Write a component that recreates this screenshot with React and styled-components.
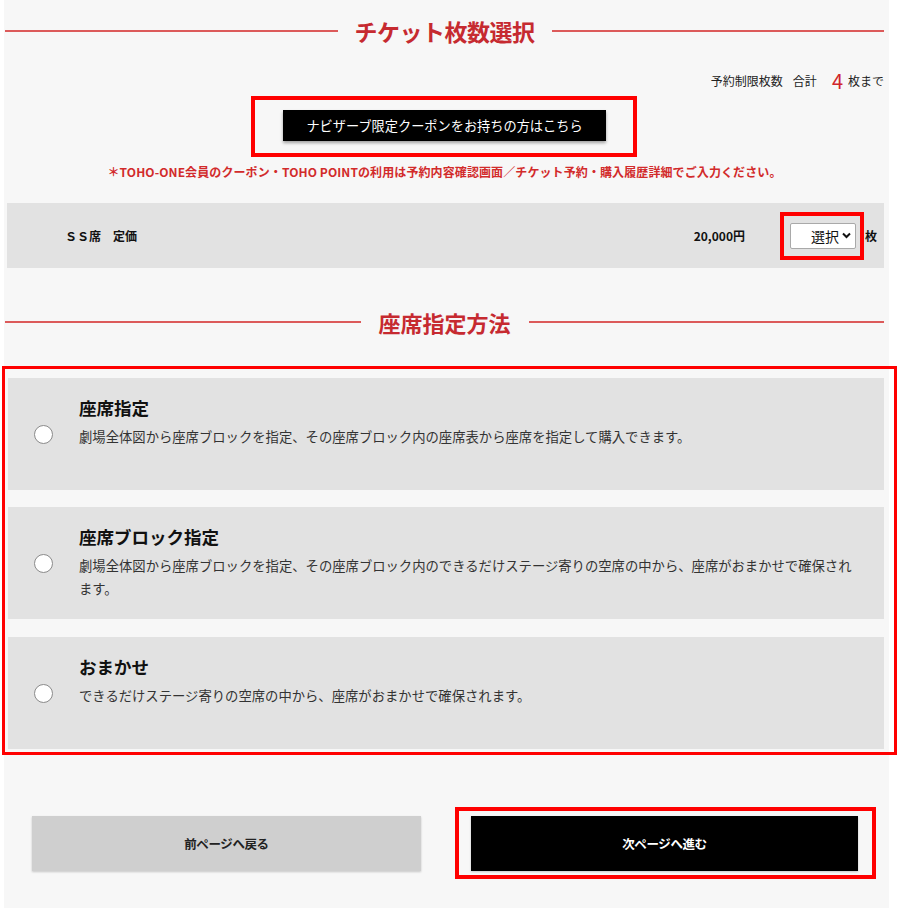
import React from 'react';
import styled, { createGlobalStyle } from 'styled-components';

const GlobalStyle = createGlobalStyle`
  body {
    margin: 0;
    background: #ffffff;
    font-family: "Noto Sans CJK JP", "Noto Sans", sans-serif;
    color: #222;
  }
`;

const Page = styled.div`
  margin-left: 4px;
  width: 885px;
  min-height: 908px;
  box-sizing: border-box;
  background: #f7f7f7;
  padding: 15px 5px 0 1px;
`;

const SectionTitle = styled.div`
  display: flex;
  align-items: center;
  gap: ${(p) => p.$gap || 17}px;
  height: 32px;
  margin-top: ${(p) => p.$top || 0}px;
  &::before,
  &::after {
    content: '';
    flex: 1;
    height: 2px;
    background: #dc5a5a;
  }
  h2 {
    margin: 0;
    font-size: ${(p) => p.$size}px;
    font-weight: 700;
    color: #c62a30;
    line-height: 32px;
    letter-spacing: ${(p) => p.$spacing || 0}px;
  }
`;

const Limit = styled.div`
  margin-top: 21px;
  height: 24px;
  display: flex;
  justify-content: flex-end;
  align-items: center;
  font-size: 12px;
  color: #222;
  span.total {
    margin-left: 10px;
  }
  span.count {
    color: #d0262c;
    font-size: 20px;
    margin: 0 5px 0 15px;
  }
`;

const Mark = styled.div`
  border: 4px solid #ff0000;
  box-sizing: border-box;
`;

const CouponMark = styled(Mark)`
  width: 386px;
  height: 61px;
  margin: 4px 0 0 246px;
  padding: 10px 0 0 28px;
`;

const CouponButton = styled.div`
  width: 323px;
  height: 31px;
  background: #000;
  color: #fff;
  font-size: 13.2px;
  display: flex;
  align-items: center;
  justify-content: center;
  box-shadow: 0 2px 3px rgba(0, 0, 0, 0.35);
`;

const Notice = styled.p`
  margin: 6px 0 0;
  line-height: 18px;
  text-align: center;
  font-size: 12px;
  font-weight: 700;
  color: #d22b2b;
  letter-spacing: 0.1px;
`;

const SeatRow = styled.div`
  margin: 22px 0 0 2px;
  height: 65px;
  background: #e2e2e2;
  display: flex;
  align-items: center;
  padding: 0 7px 0 58px;
  font-size: 12px;
  font-weight: 700;
  color: #111;
`;

const SeatName = styled.div`
  flex: 1;
`;

const Price = styled.div`
  margin-right: 35px;
`;

const SelectMark = styled(Mark)`
  width: 84px;
  height: 48px;
  padding: 7px 0 0 6px;
`;

const SelectBox = styled.div`
  width: 66px;
  height: 26px;
  box-sizing: border-box;
  background: #fff;
  border: 1px solid #a9a9a9;
  border-radius: 2px;
  display: flex;
  align-items: center;
  justify-content: flex-end;
  gap: 3px;
  padding-right: 4px;
  font-size: 14px;
  font-weight: 400;
  color: #111;
`;

const Unit = styled.span`
  margin-left: 1px;
`;

const MethodMark = styled(Mark)`
  width: 895px;
  margin: 28px 0 0 -3px;
  border-width: 3px;
  padding: 9px 10px 3px 3px;
  display: flex;
  flex-direction: column;
  gap: 17px;
`;

const MethodCard = styled.label`
  min-height: 112px;
  box-sizing: border-box;
  background: #e2e2e2;
  display: flex;
  align-items: center;
  padding: 0 22px 0 26px;
  &:nth-child(2) {
    margin-bottom: 1px;
  }
`;

const Radio = styled.span`
  width: 19px;
  height: 19px;
  flex: none;
  border-radius: 50%;
  border: 1px solid #8a8a8a;
  background: #fff;
  box-sizing: border-box;
  margin-right: 26px;
`;

const MethodBody = styled.div`
  align-self: flex-start;
  padding-top: 17px;
`;

const MethodTitle = styled.div`
  font-size: 17.5px;
  font-weight: 700;
  line-height: 26px;
  color: #111;
`;

const MethodText = styled.div`
  margin-top: 4px;
  font-size: 13.33px;
  line-height: 23px;
  color: #333;
`;

const Actions = styled.div`
  margin-top: 52px;
  display: flex;
  align-items: center;
  padding-left: 27px;
`;

const NavButton = styled.div`
  width: ${(p) => p.$width}px;
  height: 55px;
  display: flex;
  align-items: center;
  justify-content: center;
  font-size: 12.5px;
  font-weight: 700;
  letter-spacing: -0.4px;
  background: ${(p) => (p.$primary ? '#000' : '#cfcfcf')};
  color: ${(p) => (p.$primary ? '#fff' : '#222')};
  box-shadow: 0 1px 2px rgba(0, 0, 0, 0.2);
`;

const NextMark = styled(Mark)`
  margin-left: 34px;
  width: 421px;
  height: 72px;
  padding: 5px 0 0 12px;
`;

function Chevron() {
  return (
    <svg width="9" height="7" viewBox="0 0 9 7">
      <path d="M1 1.5 L4.5 5 L8 1.5" fill="none" stroke="#111" strokeWidth="2" />
    </svg>
  );
}

const methods = [
  {
    title: '座席指定',
    text: '劇場全体図から座席ブロックを指定、その座席ブロック内の座席表から座席を指定して購入できます。',
  },
  {
    title: '座席ブロック指定',
    text: '劇場全体図から座席ブロックを指定、その座席ブロック内のできるだけステージ寄りの空席の中から、座席がおまかせで確保されます。',
  },
  {
    title: 'おまかせ',
    text: 'できるだけステージ寄りの空席の中から、座席がおまかせで確保されます。',
  },
];

export default function App() {
  return (
    <>
      <GlobalStyle />
      <Page>
        <SectionTitle $size={23} $gap={17} $spacing={-0.5}>
          <h2>チケット枚数選択</h2>
        </SectionTitle>
        <Limit>
          予約制限枚数<span className="total">合計</span>
          <span className="count">4</span>枚まで
        </Limit>
        <CouponMark>
          <CouponButton>ナビザーブ限定クーポンをお持ちの方はこちら</CouponButton>
        </CouponMark>
        <Notice>
          ＊TOHO-ONE会員のクーポン・TOHO POINTの利用は予約内容確認画面／チケット予約・購入履歴詳細でご入力ください。
        </Notice>
        <SeatRow>
          <SeatName>ＳＳ席　定価</SeatName>
          <Price>20,000円</Price>
          <SelectMark>
            <SelectBox>
              選択
              <Chevron />
            </SelectBox>
          </SelectMark>
          <Unit>枚</Unit>
        </SeatRow>
        <SectionTitle $size={22} $gap={18} $top={38}>
          <h2>座席指定方法</h2>
        </SectionTitle>
        <MethodMark>
          {methods.map((m) => (
            <MethodCard key={m.title}>
              <Radio />
              <MethodBody>
                <MethodTitle>{m.title}</MethodTitle>
                <MethodText>{m.text}</MethodText>
              </MethodBody>
            </MethodCard>
          ))}
        </MethodMark>
        <Actions>
          <NavButton $width={389}>前ページへ戻る</NavButton>
          <NextMark>
            <NavButton $primary $width={387}>
              次ページへ進む
            </NavButton>
          </NextMark>
        </Actions>
      </Page>
    </>
  );
}
